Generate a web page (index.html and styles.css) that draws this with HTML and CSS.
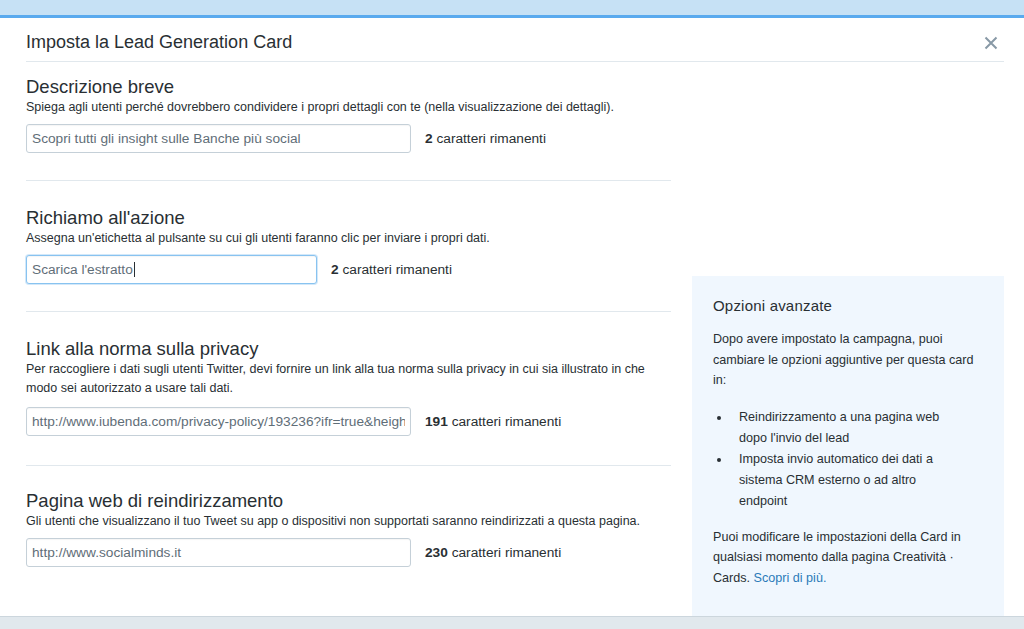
FILE: index.html
```html
<!DOCTYPE html>
<html lang="it">
<head>
<meta charset="utf-8">
<title>Imposta la Lead Generation Card</title>
<link rel="stylesheet" href="styles.css">
</head>
<body>
<div class="topbar"></div>
<div class="modal">
  <div class="modal-header">
    <h1 class="modal-title">Imposta la Lead Generation Card</h1>
    <button class="close" aria-label="Chiudi">
      <svg width="14" height="14" viewBox="0 0 14 14"><path d="M1.5 1.5 L12.5 12.5 M12.5 1.5 L1.5 12.5" stroke="#8899a6" stroke-width="2" fill="none"/></svg>
    </button>
  </div>
  <div class="modal-body">
    <div class="form-col">
      <section class="field">
        <h2 class="field-title">Descrizione breve</h2>
        <p class="field-desc">Spiega agli utenti perché dovrebbero condividere i propri dettagli con te (nella visualizzazione dei dettagli).</p>
        <div class="field-row">
          <input class="input wide" type="text" value="Scopri tutti gli insight sulle Banche più social" readonly>
          <div class="counter"><b>2</b> caratteri rimanenti</div>
        </div>
      </section>
      <section class="field">
        <h2 class="field-title">Richiamo all'azione</h2>
        <p class="field-desc">Assegna un'etichetta al pulsante su cui gli utenti faranno clic per inviare i propri dati.</p>
        <div class="field-row">
          <div class="input narrow focused">Scarica l'estratto<span class="caret"></span></div>
          <div class="counter"><b>2</b> caratteri rimanenti</div>
        </div>
      </section>
      <section class="field tall">
        <h2 class="field-title">Link alla norma sulla privacy</h2>
        <p class="field-desc">Per raccogliere i dati sugli utenti Twitter, devi fornire un link alla tua norma sulla privacy in cui sia illustrato in che modo sei autorizzato a usare tali dati.</p>
        <div class="field-row">
          <input class="input wide" type="text" value="http://www.iubenda.com/privacy-policy/193236?ifr=true&amp;height=600" readonly>
          <div class="counter"><b>191</b> caratteri rimanenti</div>
        </div>
      </section>
      <section class="field last">
        <h2 class="field-title">Pagina web di reindirizzamento</h2>
        <p class="field-desc">Gli utenti che visualizzano il tuo Tweet su app o dispositivi non supportati saranno reindirizzati a questa pagina.</p>
        <div class="field-row">
          <input class="input wide" type="text" value="http://www.socialminds.it" readonly>
          <div class="counter"><b>230</b> caratteri rimanenti</div>
        </div>
      </section>
    </div>
    <aside class="advanced">
      <h3 class="advanced-title">Opzioni avanzate</h3>
      <p class="advanced-text">Dopo avere impostato la campagna, puoi cambiare le opzioni aggiuntive per questa card in:</p>
      <ul class="advanced-list">
        <li>Reindirizzamento a una pagina web dopo l'invio del lead</li>
        <li>Imposta invio automatico dei dati a sistema CRM esterno o ad altro endpoint</li>
      </ul>
      <p class="advanced-text">Puoi modificare le impostazioni della Card in qualsiasi momento dalla pagina Creatività · Cards. <a class="link" href="#">Scopri di più.</a></p>
    </aside>
  </div>
</div>
<div class="footer-strip"></div>
</body>
</html>
```
FILE: styles.css
```css
* { box-sizing: border-box; }
html, body { margin: 0; padding: 0; }
body {
  width: 1024px;
  height: 629px;
  overflow: hidden;
  background: #fff;
  font-family: "Liberation Sans", Arial, sans-serif;
  color: #292f33;
}
.topbar {
  height: 18px;
  background: #c6e1f5;
  border-bottom: 3px solid #5aaaee;
}
.modal {
  height: 598px;
  padding: 0 20px 0 26px;
  display: flex;
  flex-direction: column;
}
.modal-header {
  height: 44px;
  padding-top: 6px;
  display: flex;
  align-items: center;
  justify-content: space-between;
  border-bottom: 1px solid #e1e8ed;
  flex: none;
}
.modal-title {
  margin: 0;
  font-size: 18px;
  font-weight: normal;
  color: #292f33;
}
.close {
  border: 0;
  background: none;
  padding: 0;
  margin-right: 6px;
  width: 14px;
  height: 14px;
  display: flex;
}
.modal-body {
  flex: 1;
  display: flex;
  gap: 21px;
}
.form-col {
  width: 645px;
  flex: none;
}
.field {
  padding: 14px 0 27px;
  border-bottom: 1px solid #e1e8ed;
}
.field + .field { padding-top: 26px; }
.field.tall { padding-bottom: 29px; }
.field.tall .field-row { margin-top: 9px; }
.field.last { border-bottom: 0; padding-top: 24px; }
.field-title {
  margin: 0;
  font-size: 18.5px;
  line-height: 22px;
  font-weight: normal;
  color: #292f33;
}
.field-desc {
  margin: 0;
  font-size: 12.5px;
  line-height: 19px;
  color: #292f33;
}
.field-row {
  display: flex;
  align-items: center;
  margin-top: 7px;
}
.input {
  display: block;
  height: 29px;
  margin: 0;
  border: 1px solid #c5d0d8;
  border-radius: 3px;
  padding: 0 5px;
  font-family: "Liberation Sans", Arial, sans-serif;
  font-size: 13.7px;
  line-height: 27px;
  color: #5f6e78;
  background: #fff;
  white-space: nowrap;
  overflow: hidden;
  outline: none;
  box-shadow: inset 0 1px 1px rgba(0,0,0,0.04);
}
.input.wide { width: 385px; }
.input.narrow { width: 291px; }
.input.focused {
  border-color: #88c3f0;
  box-shadow: 0 0 0 1px #d3e8f9, inset 0 1px 1px rgba(0,0,0,0.04);
}
.caret {
  display: inline-block;
  width: 1px;
  height: 15px;
  background: #292f33;
  vertical-align: -3px;
  margin-left: 1px;
}
.counter {
  margin-left: 14px;
  font-size: 13.7px;
  color: #292f33;
}
.counter b { font-weight: bold; }
.advanced {
  width: 312px;
  flex: none;
  align-self: flex-end;
  height: 340px;
  background: #f0f7fe;
  padding: 20px 28px 0 21px;
}
.advanced-title {
  margin: 0;
  font-size: 15px;
  line-height: 20px;
  font-weight: normal;
  color: #292f33;
  letter-spacing: 0.2px;
}
.advanced-text {
  margin: 13px 0 0;
  font-size: 12.6px;
  line-height: 20.6px;
  color: #292f33;
}
.advanced-list {
  margin: 16px 0 0;
  padding: 0 16px 0 18px;
  font-size: 12.6px;
  line-height: 21px;
}
.advanced-list li { padding-left: 8px; }
.advanced-list + .advanced-text { margin-top: 15px; }
.link { color: #2b7bb9; text-decoration: none; }
.footer-strip {
  height: 13px;
  background: #e1e8ed;
  border-top: 1px solid #ccd6dd;
}
```
